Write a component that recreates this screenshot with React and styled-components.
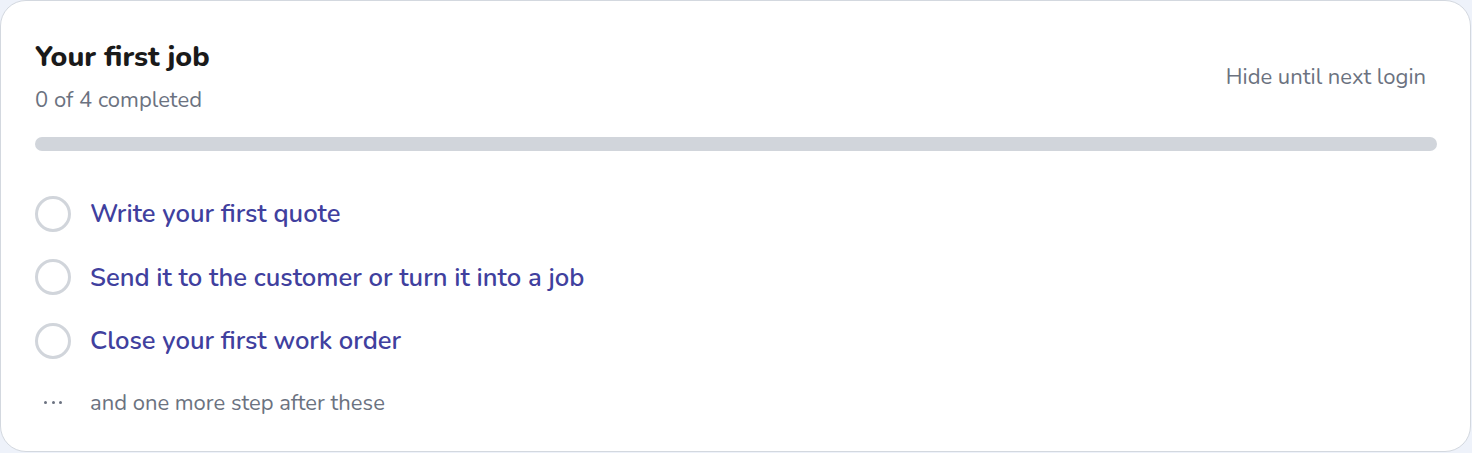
import React from "react";
import styled, { createGlobalStyle } from "styled-components";

const Global = createGlobalStyle`
  html, body { margin: 0; padding: 0; background: #eef2fa; }
  body { font-family: "Nunito", "Lato", "Noto Sans", sans-serif; }
  * { box-sizing: border-box; }
`;

const Card = styled.section`
  width: 1471px;
  height: 452px;
  background: #ffffff;
  border: 1.5px solid #d3d8df;
  border-radius: 26px;
  padding: 38px 33px 0 34px;
  display: flex;
  flex-direction: column;
`;

const Header = styled.header`
  display: flex;
  align-items: center;
  justify-content: space-between;
`;

const TitleBlock = styled.div`
  display: flex;
  flex-direction: column;
  gap: 11px;
`;

const Title = styled.h2`
  margin: 0;
  font-size: 28.6px;
  line-height: 36px;
  font-weight: 800;
  color: #1a1a1a;
`;

const Subtitle = styled.p`
  margin: 0;
  font-size: 22px;
  line-height: 28px;
  color: #6b7280;
`;

const HideButton = styled.button`
  border: 0;
  background: none;
  font: inherit;
  font-size: 22px;
  line-height: 28px;
  color: #6b7280;
  padding: 0 11px;
  cursor: pointer;
`;

const Track = styled.div`
  margin-top: 23px;
  height: 14px;
  border-radius: 7px;
  background: #d1d5db;
  overflow: hidden;
`;

const Fill = styled.div`
  height: 100%;
  background: #4040a0;
`;

const List = styled.ul`
  list-style: none;
  margin: 44px 0 0;
  padding: 0;
  display: flex;
  flex-direction: column;
  gap: 26.5px;
`;

const Item = styled.li`
  display: flex;
  align-items: center;
  gap: 19px;
  height: 37px;
`;

const Check = styled.span`
  width: 36px;
  height: 36px;
  border-radius: 50%;
  border: 3px solid #d1d5db;
  flex: none;
`;

const ItemText = styled.span`
  font-size: 25.6px;
  line-height: 37px;
  font-weight: 600;
  color: #40409e;
`;

const MoreRow = styled.div`
  display: flex;
  align-items: center;
  gap: 19px;
  margin-top: 29.5px;
`;

const Dots = styled.span`
  width: 36px;
  display: flex;
  justify-content: center;
  gap: 4.5px;
  flex: none;
`;

const Dot = styled.span`
  width: 3px;
  height: 3px;
  border-radius: 50%;
  background: #6b7280;
`;

const MoreText = styled.span`
  font-size: 22px;
  line-height: 28px;
  color: #6b7280;
`;

const steps = [
  "Write your first quote",
  "Send it to the customer or turn it into a job",
  "Close your first work order",
];

export default function App() {
  const done = 0;
  const total = 4;
  return (
    <>
      <Global />
      <Card>
        <Header>
          <TitleBlock>
            <Title>Your first job</Title>
            <Subtitle>{done} of {total} completed</Subtitle>
          </TitleBlock>
          <HideButton>Hide until next login</HideButton>
        </Header>
        <Track>
          <Fill style={{ width: `${(done / total) * 100}%` }} />
        </Track>
        <List>
          {steps.map((s) => (
            <Item key={s}>
              <Check />
              <ItemText>{s}</ItemText>
            </Item>
          ))}
        </List>
        <MoreRow>
          <Dots>
            <Dot />
            <Dot />
            <Dot />
          </Dots>
          <MoreText>and one more step after these</MoreText>
        </MoreRow>
      </Card>
    </>
  );
}
